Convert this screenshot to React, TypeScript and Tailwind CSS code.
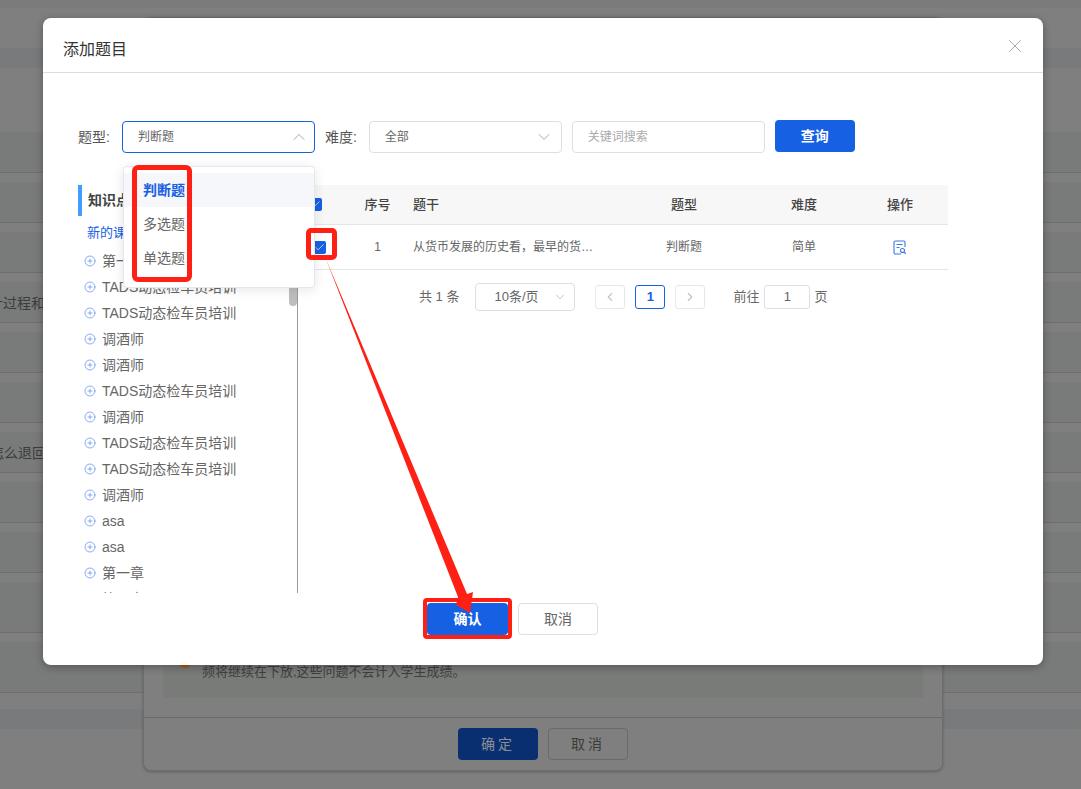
import { Check, ChevronDown, ChevronLeft, ChevronRight, ChevronUp, CirclePlus, X } from 'lucide-react'

const treeItems = [
  '第一章',
  'TADS动态检车员培训',
  'TADS动态检车员培训',
  '调酒师',
  '调酒师',
  'TADS动态检车员培训',
  '调酒师',
  'TADS动态检车员培训',
  'TADS动态检车员培训',
  '调酒师',
  'asa',
  'asa',
  '第一章',
  '第一章',
]

const backdropRows: { height: string; text?: string; offset?: string }[] = [
  { height: 'h-[50px]' },
  { height: 'h-[50px]' },
  { height: 'h-[50px]', text: '计过程和原理', offset: '-ml-[11px]' },
  { height: 'h-[50px]' },
  { height: 'h-[50px]' },
  { height: 'h-[50px]', text: '怎么退回', offset: '-ml-[10px]' },
  { height: 'h-[50px]' },
  { height: 'h-[50px]' },
  { height: 'h-[60px]' },
  { height: 'h-[60px]' },
]

const tableGrid = 'grid grid-cols-[44px_71px_211px_120px_120px_72px_12px] items-center'

function Checkbox() {
  return (
    <span className="flex h-[13px] w-[13px] items-center justify-center rounded-[2px] bg-[#1660e3]">
      <Check size={11} strokeWidth={1.5} className="text-white" />
    </span>
  )
}

function DocSearchIcon() {
  return (
    <svg width="14" height="15" viewBox="0 0 14 15" fill="none" stroke="#3b78e7" strokeWidth="1.1">
      <path d="M8 14H2.5A1.5 1.5 0 0 1 1 12.5V2.5A1.5 1.5 0 0 1 2.5 1h8A1.5 1.5 0 0 1 12 2.5V7" />
      <path d="M3.5 4.5h6M3.5 7.5h3" />
      <circle cx="9.5" cy="10.5" r="2" />
      <path d="M11 12l1.8 1.8" />
    </svg>
  )
}

function FilterSelect({ value, active }: { value: string; active?: boolean }) {
  return (
    <div
      className={`flex h-[32px] w-[193px] items-center justify-between rounded-[4px] border pl-[15px] pr-[5px] text-[12px] text-[#666] ${
        active ? 'border-[#1660e3]' : 'border-[#dcdfe6]'
      }`}
    >
      <span>{value}</span>
      {active ? (
        <ChevronUp size={20} strokeWidth={1} className="text-[#999]" />
      ) : (
        <ChevronDown size={20} strokeWidth={1} className="mr-[2px] text-[#999]" />
      )}
    </div>
  )
}

export default function App() {
  return (
    <div className="relative h-[789px] w-[1081px] overflow-hidden bg-[#7f7f7f] font-['Liberation_Sans','Noto_Sans_CJK_SC',sans-serif]">
      {/* Dimmed page behind the dialog */}
      <div className="h-[8px] bg-[#7a7b7d]" />
      <div className="h-[40px]" />
      <div className="h-[20px] bg-[#797a7c]" />
      <div className="h-[64px]" />
      <div className="h-[41px] border-b border-[#6e6e6e] bg-[#797b7a]" />
      {backdropRows.map((row, i) => (
        <div key={i} className={`flex flex-col border-b border-[#6e6e6e] ${row.height}`}>
          <div className="h-[9px] shrink-0" />
          <div className="flex flex-1 items-center overflow-hidden bg-[#797b7a] pt-[3px]">
            {row.text && (
              <span className={`whitespace-nowrap text-[14px] text-[#3c3c3c] ${row.offset}`}>{row.text}</span>
            )}
          </div>
        </div>
      ))}
      <div className="h-[16px]" />
      <div className="h-[20px] bg-[#797a7c]" />

      {/* Card under the dialog */}
      <div className="absolute left-[143px] top-[17px] flex h-[754px] w-[800px] flex-col rounded-[8px] border border-[#6e6e6e] bg-[#7f7f7f] shadow-[0_1px_3px_rgba(0,0,0,0.25)]">
        <div className="relative mx-[19px] flex flex-1 flex-col justify-end bg-[#797b78] pb-[17px] pl-[39px]">
          <span className="absolute bottom-[30px] left-[16px] h-[12px] w-[12px] rounded-full bg-[#a8591f]" />
          <p className="text-[13px] leading-[18px] text-[#3f3f3f]">频将继续在下放,这些问题不会计入学生成绩。</p>
        </div>
        <div className="mt-[19px] flex h-[53px] items-start justify-end gap-[10px] border-t border-[#6a6a6a] pr-[314px] pt-[10px]">
          <button className="h-[32px] w-[80px] rounded-[4px] bg-[#0a2f70] text-[14px] tracking-[3px] text-[#8b8f97]">确定</button>
          <button className="h-[32px] w-[80px] rounded-[4px] border border-[#6a6a6a] text-[14px] tracking-[3px] text-[#3c3c3c]">取消</button>
        </div>
      </div>

      {/* Dialog */}
      <div className="absolute left-[43px] top-[18px] h-[647px] w-[1000px] rounded-[8px] bg-white shadow-[0_2px_8px_rgba(0,0,0,0.3)]">
        <div className="flex h-[55px] items-center justify-between border-b border-[#dcdcdc] pl-[20px] pr-[17px]">
          <h2 className="pt-[10px] text-[16px] text-[#333]">添加题目</h2>
          <X size={22} strokeWidth={0.8} className="mt-[2px] text-[#888]" />
        </div>

        <div className="flex items-center pl-[35px] pt-[47px]">
          <span className="mr-[12px] text-[14px] text-[#555]">题型:</span>
          <FilterSelect value="判断题" active />
          <span className="ml-[10px] mr-[12px] text-[14px] text-[#555]">难度:</span>
          <FilterSelect value="全部" />
          <div className="ml-[10px] flex h-[32px] w-[193px] items-center rounded-[4px] border border-[#dcdfe6] pl-[15px] text-[12px] text-[#aaa]">
            关键词搜索
          </div>
          <button className="mb-[2px] ml-[10px] h-[32px] w-[80px] rounded-[4px] bg-[#1660e3] text-[14px] font-bold text-white">查询</button>
        </div>

        <div className="mt-[31px] flex h-[408px] pl-[35px]">
          {/* Knowledge tree */}
          <div className="relative h-full w-[220px] overflow-hidden border-r border-[#9a9a9a]">
            <div className="flex h-[31px] items-center border-l-[4px] border-[#409eff] pl-[6px] text-[14px] font-bold text-[#444]">知识点</div>
            <div className="flex h-[32px] items-center pl-[9px] pt-[2px] text-[13px] text-[#1660e3]">新的课程</div>
            {treeItems.map((item, i) => (
              <div key={i} className="flex h-[26px] items-center text-[14px] text-[#666]">
                <CirclePlus size={12} strokeWidth={1.2} className="ml-[6px] mr-[6px] shrink-0 text-[#3b78e7]" />
                {item}
              </div>
            ))}
            <span className="absolute right-0 top-[60px] h-[61px] w-[8px] rounded-[4px] bg-[#bdbdbd]" />
          </div>

          {/* Question table */}
          <div className="w-[650px]">
            <div className={`${tableGrid} h-[40px] border-b border-[#e5e5e5] bg-[#f7f7f7] text-center text-[13px] font-medium text-[#444]`}>
              <span className="mr-[9px] flex justify-center"><Checkbox /></span>
              <span>序号</span>
              <span className="text-left">题干</span>
              <span>题型</span>
              <span>难度</span>
              <span>操作</span>
            </div>
            <div className={`${tableGrid} h-[45px] border-b border-[#e5e5e5] text-center text-[12px] text-[#666]`}>
              <span className="mr-[1px] flex justify-center"><Checkbox /></span>
              <span>1</span>
              <span className="w-[182px] truncate text-left">从货币发展的历史看，最早的货币形式是实物货币</span>
              <span>判断题</span>
              <span>简单</span>
              <span className="flex justify-center"><DocSearchIcon /></span>
            </div>
            <div className="mt-[13px] flex items-center pl-[121px] text-[13px] text-[#666]">
              <span>共 1 条</span>
              <div className="ml-[16px] flex h-[28px] w-[100px] items-center justify-between rounded-[4px] border border-[#dcdfe6] pl-[18px] pr-[7px]">
                <span>10条/页</span>
                <ChevronDown size={14} strokeWidth={1} className="text-[#999]" />
              </div>
              <div className="ml-[20px] flex h-[24px] w-[30px] items-center justify-center rounded-[3px] border border-[#e4e7ed] text-[#c0c4cc]">
                <ChevronLeft size={14} />
              </div>
              <div className="ml-[10px] flex h-[24px] w-[30px] items-center justify-center rounded-[3px] border border-[#1660e3] font-bold text-[#1660e3]">1</div>
              <div className="ml-[10px] flex h-[24px] w-[30px] items-center justify-center rounded-[3px] border border-[#e4e7ed] text-[#c0c4cc]">
                <ChevronRight size={14} />
              </div>
              <span className="ml-[28px]">前往</span>
              <div className="ml-[5px] flex h-[24px] w-[46px] items-center justify-center rounded-[3px] border border-[#dcdfe6]">1</div>
              <span className="ml-[4px]">页</span>
            </div>
          </div>
        </div>

        <div className="mt-[10px] flex gap-[10px] pl-[384px]">
          <button className="h-[32px] w-[81px] rounded-[4px] bg-[#1660e3] text-[14px] font-bold text-white">确认</button>
          <button className="h-[32px] w-[80px] rounded-[4px] border border-[#dcdfe6] text-[14px] text-[#666]">取消</button>
        </div>

        {/* Type dropdown */}
        <div className="absolute left-[80px] top-[148px] h-[122px] w-[192px] rounded-[4px] border border-[#e4e7ed] bg-white py-[6px] shadow-[0_2px_12px_rgba(0,0,0,0.1)]">
          <div className="flex h-[34px] items-center bg-[#f5f7fa] pl-[19px] text-[14px] font-bold text-[#1660e3]">判断题</div>
          <div className="flex h-[34px] items-center pl-[19px] text-[14px] text-[#666]">多选题</div>
          <div className="flex h-[34px] items-center pl-[19px] text-[14px] text-[#666]">单选题</div>
        </div>

        {/* Red annotations */}
        <div className="absolute left-[89px] top-[147px] h-[117px] w-[60px] rounded-[6px] border-[5px] border-[#ff2015]" />
        <div className="absolute left-[263px] top-[210px] h-[32px] w-[31px] rounded-[5px] border-[5px] border-[#ff2015]" />
        <div className="absolute left-[380px] top-[580px] h-[41px] w-[89px] rounded-[4px] border-[4px] border-[#ff2015]" />
        <svg className="pointer-events-none absolute left-0 top-0" width="1000" height="647" viewBox="43 18 1000 647">
          <polygon points="325.5,258 458,597 456,605 470,613 473,592 467,594" fill="#ff2015" />
        </svg>
      </div>
    </div>
  )
}
